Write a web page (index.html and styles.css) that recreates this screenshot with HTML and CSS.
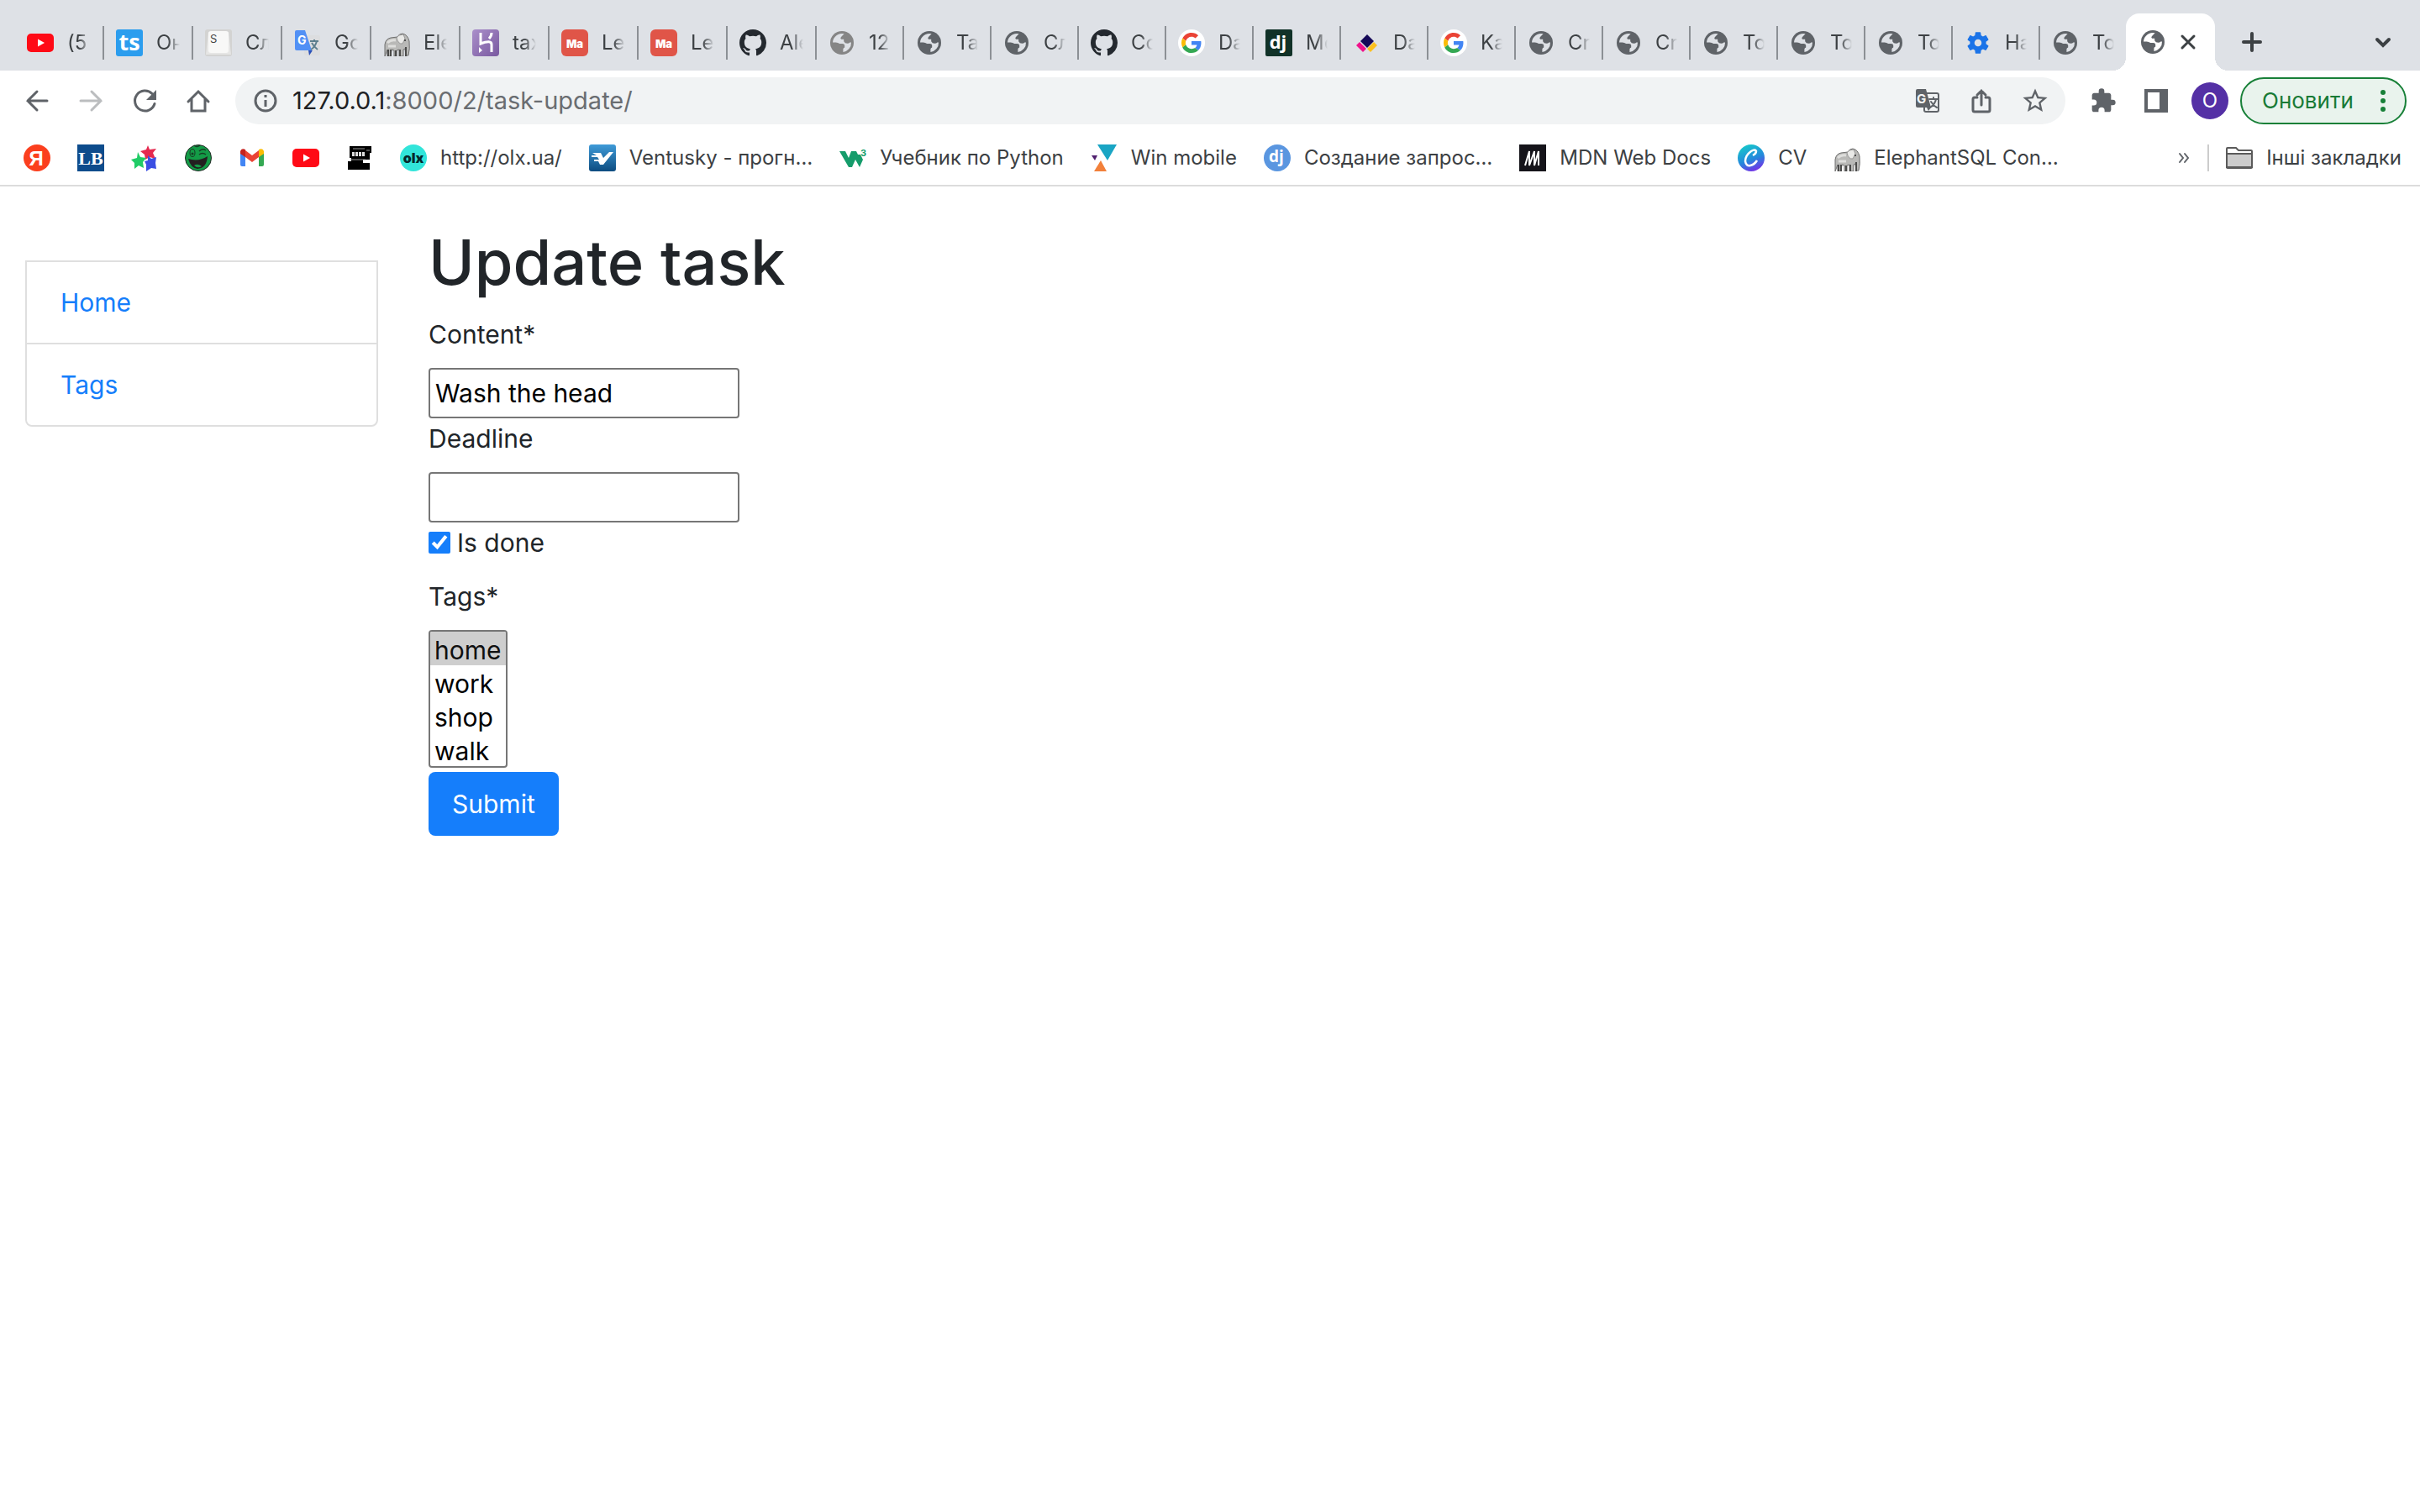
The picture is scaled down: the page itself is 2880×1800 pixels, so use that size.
FILE: index.html
```
<!DOCTYPE html>
<html lang="en">
<head>
<meta charset="utf-8">
<title>Update task</title>
<link rel="stylesheet" href="styles.css">
</head>
<body>
<svg class="sprite" aria-hidden="true">
  <symbol id="globe" viewBox="-2 -2 32 32">
    <circle cx="14" cy="14" r="14" fill="currentColor"/>
    <path class="sea" d="M3 13.4A11 11 0 0 1 16.6 3.3L12.8 7.2q-1.2 1.6.4 2.6h3v2.4q1.2 2.6 4.2 2.6 2-.2 3-1.4h1.6A11 11 0 0 1 15.4 24.9v-3.3q.2-1.6 1.8-2v-2.5q-.2-1.9-2.6-2.1h-3.4q-2-1.6-4.4-1.6z"/>
  </symbol>
  <symbol id="youtube" viewBox="0 0 32 32">
    <rect y="5" width="32" height="22" rx="5" fill="#ff0a16"/>
    <path d="M13 11.5v9l8-4.5z" fill="#fff"/>
  </symbol>
  <symbol id="github" viewBox="0 0 16 16">
    <path fill="#24292f" d="M8 0C3.58 0 0 3.58 0 8c0 3.54 2.29 6.53 5.47 7.59.4.07.55-.17.55-.38 0-.19-.01-.82-.01-1.49-2.01.37-2.53-.49-2.69-.94-.09-.23-.48-.94-.82-1.13-.28-.15-.68-.52-.01-.53.63-.01 1.08.58 1.23.82.72 1.21 1.87.87 2.33.66.07-.52.28-.87.51-1.07-1.78-.2-3.64-.89-3.64-3.95 0-.87.31-1.59.82-2.15-.08-.2-.36-1.02.08-2.12 0 0 .67-.21 2.2.82.64-.18 1.32-.27 2-.27s1.36.09 2 .27c1.53-1.04 2.2-.82 2.2-.82.44 1.1.16 1.92.08 2.12.51.56.82 1.27.82 2.15 0 3.07-1.87 3.75-3.65 3.95.29.25.54.73.54 1.48 0 1.07-.01 1.93-.01 2.2 0 .21.15.46.55.38A8.01 8.01 0 0 0 16 8c0-4.42-3.58-8-8-8z"/>
  </symbol>
  <symbol id="google" viewBox="-8 -8 64 64">
    <circle cx="24" cy="24" r="32" fill="#fff"/>
    <path fill="#EA4335" d="M24 9.5c3.54 0 6.71 1.22 9.21 3.6l6.85-6.85C35.9 2.38 30.47 0 24 0 14.62 0 6.51 5.38 2.56 13.22l7.98 6.19C12.43 13.72 17.74 9.5 24 9.5z"/>
    <path fill="#4285F4" d="M46.98 24.55c0-1.57-.15-3.09-.38-4.55H24v9.02h12.94c-.58 2.96-2.26 5.48-4.78 7.18l7.73 6c4.51-4.18 7.09-10.36 7.09-17.65z"/>
    <path fill="#FBBC05" d="M10.53 28.59c-.48-1.45-.76-2.99-.76-4.59s.27-3.14.76-4.59l-7.98-6.19C.92 16.46 0 20.12 0 24s.92 7.54 2.56 10.78l7.97-6.19z"/>
    <path fill="#34A853" d="M24 48c6.48 0 11.93-2.13 15.89-5.81l-7.73-6c-2.15 1.45-4.92 2.3-8.16 2.3-6.26 0-11.57-4.22-13.47-9.91l-7.98 6.19C6.51 42.62 14.62 48 24 48z"/>
  </symbol>
  <symbol id="mate" viewBox="0 0 32 32">
    <rect width="32" height="32" rx="6" fill="#e05548"/>
    <text x="16" y="22" text-anchor="middle" font-family="Inter, sans-serif" font-weight="900" font-size="13" fill="#fff">Ma</text>
  </symbol>
  <symbol id="elephant" viewBox="0 0 32 32">
    <path d="M2 32V18q1-7 7-8l8-1q2-4 6-4 6 1 8 9 1 9-1 17h-3l-1-8-2 1v8h-5v-8l-3 1v7h-3v-7l-3-1-1 8H5v-8z" fill="#b9b9b7" stroke="#6f6f6e"/>
    <path d="M16 10q2 8 7 7l3-6-2-5-5 1z" fill="#e9e9e7" stroke="#999"/>
    <path d="M6 24v8M9 24v8M15 25v7M20 24v8M27 21v11" stroke="#4b4b4a" stroke-width="2"/>
    <path d="M5 16q4-4 10-3M6 20h9" stroke="#dededc" stroke-width="3" fill="none"/>
    <circle cx="26" cy="13" r="1" fill="#333"/>
  </symbol>
</svg>

<header class="browser">
  <nav class="tabs" aria-label="Tabs">
    <a class="tab wide" href="#"><svg class="ico"><use href="#youtube"/></svg><span>(5</span></a>
    <a class="tab wide" href="#"><svg class="ico" viewBox="0 0 32 32"><rect width="32" height="32" rx="3" fill="#2b9dee"/><text x="16" y="25" text-anchor="middle" font-family="Open Sans, sans-serif" font-weight="700" font-size="27" fill="#fff">ts</text></svg><span>Он</span></a>
    <a class="tab wide" href="#"><svg class="ico" viewBox="0 0 32 32"><rect width="32" height="32" rx="3" fill="#d3d3d2"/><path d="M1 30 4 3h24l3 27z" fill="#e6e6e5"/><rect x="4" y="2" width="24" height="26" rx="3" fill="#f8f8f7"/><text x="6" y="16" font-family="Inter, sans-serif" font-size="13" fill="#444">S</text></svg><span>Сл</span></a>
    <a class="tab wide" href="#"><svg class="ico" viewBox="0 0 32 32"><rect x="12" y="7" width="19" height="24" rx="2" fill="#dcdddf"/><path d="M17 25h5l-4 6z" fill="#2b50b8"/><path d="M3 1h10l8 24H3q-2 0-2-2V3q0-2 2-2z" fill="#5290f5"/><text x="4" y="18" font-family="Inter, sans-serif" font-weight="700" font-size="14" fill="#fff">G</text><path d="M19 14h10M24 12v2M27 14q-2 7-7 10M21 16q3 5 7 8" stroke="#5d7f8d" stroke-width="2" fill="none"/></svg><span>Go</span></a>
    <a class="tab wide" href="#"><svg class="ico"><use href="#elephant"/></svg><span>Ele</span></a>
    <a class="tab wide" href="#"><svg class="ico" viewBox="0 0 32 32"><defs><linearGradient id="violet" x2="1" y2="1"><stop stop-color="#aa8fca"/><stop offset="1" stop-color="#7959a0"/></linearGradient></defs><rect width="32" height="32" rx="4" fill="url(#violet)"/><path d="M10 4v13q13-5 13 1v9M23 4q0 4-3 7" fill="none" stroke="#fff" stroke-width="3"/><path d="M8 21v7l4-3z" fill="#fff"/></svg><span>tax</span></a>
    <a class="tab wide" href="#"><svg class="ico"><use href="#mate"/></svg><span>Le</span></a>
    <a class="tab wide" href="#"><svg class="ico"><use href="#mate"/></svg><span>Le</span></a>
    <a class="tab wide" href="#"><svg class="ico"><use href="#github"/></svg><span>Ale</span></a>
    <a class="tab" href="#"><svg class="ico pale"><use href="#globe"/></svg><span>12</span></a>
    <a class="tab" href="#"><svg class="ico"><use href="#globe"/></svg><span>Ta</span></a>
    <a class="tab" href="#"><svg class="ico"><use href="#globe"/></svg><span>Сл</span></a>
    <a class="tab" href="#"><svg class="ico"><use href="#github"/></svg><span>Co</span></a>
    <a class="tab" href="#"><svg class="ico"><use href="#google"/></svg><span>Da</span></a>
    <a class="tab" href="#"><svg class="ico" viewBox="0 0 32 32"><rect width="32" height="32" rx="2" fill="#113228"/><text x="15" y="23" text-anchor="middle" font-family="Open Sans, sans-serif" font-weight="700" font-size="22" fill="#fff">dj</text></svg><span>Mo</span></a>
    <a class="tab" href="#"><svg class="ico" viewBox="0 0 32 32"><path d="m17 6 8 8-8 8-8-8z" fill="#150958"/><path d="m8 15 8 8-4 4-8-8z" fill="#f0128b"/><path d="m25 15 4 4-8 8-4-4z" fill="#fcc01f"/></svg><span>Da</span></a>
    <a class="tab" href="#"><svg class="ico"><use href="#google"/></svg><span>Ka</span></a>
    <a class="tab" href="#"><svg class="ico"><use href="#globe"/></svg><span>Cr</span></a>
    <a class="tab" href="#"><svg class="ico"><use href="#globe"/></svg><span>Cr</span></a>
    <a class="tab" href="#"><svg class="ico"><use href="#globe"/></svg><span>To</span></a>
    <a class="tab" href="#"><svg class="ico"><use href="#globe"/></svg><span>To</span></a>
    <a class="tab" href="#"><svg class="ico"><use href="#globe"/></svg><span>To</span></a>
    <a class="tab" href="#"><svg class="ico" viewBox="0 0 24 24"><path fill="#1a73e8" d="M19.14 12.94c.04-.3.06-.61.06-.94 0-.32-.02-.64-.07-.94l2.03-1.58c.18-.14.23-.41.12-.61l-1.92-3.32c-.12-.22-.37-.29-.59-.22l-2.39.96c-.5-.38-1.03-.7-1.62-.94l-.36-2.54c-.04-.24-.24-.41-.48-.41h-3.84c-.24 0-.43.17-.47.41l-.36 2.54c-.59.24-1.13.57-1.62.94l-2.39-.96c-.22-.08-.47 0-.59.22L2.74 8.87c-.12.21-.08.47.12.61l2.03 1.58c-.05.3-.09.63-.09.94s.02.64.07.94l-2.03 1.58c-.18.14-.23.41-.12.61l1.92 3.32c.12.22.37.29.59.22l2.39-.96c.5.38 1.03.7 1.62.94l.36 2.54c.05.24.24.41.48.41h3.84c.24 0 .44-.17.47-.41l.36-2.54c.59-.24 1.13-.56 1.62-.94l2.39.96c.22.08.47 0 .59-.22l1.92-3.32c.12-.22.07-.47-.12-.61l-2.01-1.58zM12 15.2a3.2 3.2 0 1 1 0-6.4 3.2 3.2 0 0 1 0 6.4z"/></svg><span>На</span></a>
    <a class="tab last" href="#"><svg class="ico"><use href="#globe"/></svg><span>To</span></a>
    <div class="tab active"><svg class="ico"><use href="#globe"/></svg><button class="plain" aria-label="Close tab"><svg class="close" viewBox="0 0 16 16"><path d="m1 1 14 14M15 1 1 15" stroke-width="3"/></svg></button></div>
    <button class="plain new-tab" aria-label="New tab"><svg class="ico" viewBox="0 0 32 32"><path d="M6 16h20M16 6v20" stroke-width="4"/></svg></button>
    <button class="plain tab-search" aria-label="Search tabs"><svg class="ico" viewBox="0 0 32 32"><path d="m9 13 7 7 7-7" stroke-width="4"/></svg></button>
  </nav>

  <div class="toolbar">
    <div class="nav-buttons">
      <button class="plain" aria-label="Back"><svg class="ico line" viewBox="0 0 32 32"><path d="M28 16H5M16 5 5 16l11 11"/></svg></button>
      <button class="plain" aria-label="Forward"><svg class="ico line off" viewBox="0 0 32 32"><path d="M4 16h24M17 5l11 11-11 11"/></svg></button>
      <button class="plain" aria-label="Reload"><svg class="ico line" viewBox="0 0 32 32"><path d="M28 19.5A12 12 0 1 1 25 7.5"/><path class="solid" d="M30 3v12H18z"/></svg></button>
      <button class="plain" aria-label="Home"><svg class="ico line" viewBox="0 0 32 32"><path d="M4 17 16 5l12 12M8 14v14h16V14"/></svg></button>
    </div>
    <div class="omnibox">
      <svg class="ico line" viewBox="0 0 32 32"><circle cx="16" cy="16" r="12"/><path d="M16 15v8M16 9v3"/></svg>
      <div class="url" role="textbox" aria-label="Address"><b>127.0.0.1</b>:8000/2/task-update/</div>
      <div class="page-actions">
        <button class="plain" aria-label="Translate"><svg class="ico" viewBox="0 0 32 32"><rect x="12" y="7" width="17" height="22" rx="2" fill="none" stroke="#5f6368" stroke-width="2"/><path d="M18 14h10M23 12v2M26 14q-1 6-7 10M20 17q3 5 7 7" fill="none" stroke="#5f6368" stroke-width="2"/><path d="M4 2h10l6 22-3 4-2-4H4q-2 0-2-2V4q0-2 2-2z" fill="#5f6368"/><text x="3" y="19" font-family="Inter, sans-serif" font-weight="700" font-size="15" fill="#f1f3f4">G</text></svg></button>
        <button class="plain" aria-label="Share"><svg class="ico line" viewBox="0 0 32 32"><path d="M11 12H8q-2 0-2 2v13q0 2 2 2h16q2 0 2-2V14q0-2-2-2h-3M16 21V4M11 9l5-5 5 5"/></svg></button>
        <button class="plain" aria-label="Bookmark"><svg class="ico" viewBox="1 1 22 22"><path fill="#5f6368" d="m22 9.240-7.190-.62L12 2 9.190 8.630 2 9.240l5.460 4.730L5.820 21 12 17.270 18.180 21l-1.630-7.030L22 9.240zM12 15.400l-3.760 2.270 1-4.280-3.320-2.880 4.380-.38L12 6.100l1.710 4.040 4.380.38-3.320 2.880 1 4.280L12 15.400z"/></svg></button>
      </div>
    </div>
    <button class="plain ext" aria-label="Extensions"><svg class="ico" viewBox="0 0 24 24"><path fill="#5f6368" d="M20.500 11H19V7c0-1.100-.9-2-2-2h-4V3.500a2.500 2.500 0 0 0-5 0V5H4c-1.100 0-2 .9-2 2v3.800h1.500a2.700 2.700 0 0 1 0 5.400H2V20c0 1.100.9 2 2 2h3.800v-1.500a2.700 2.700 0 0 1 5.400 0V22H17c1.100 0 2-.9 2-2v-4h1.500a2.500 2.500 0 0 0 0-5z"/></svg></button>
    <button class="plain panel" aria-label="Side panel"><svg class="ico" viewBox="0 0 32 32"><path fill="#5f6368" d="M2 2h28v28H2zm4 4v20h14V6z" fill-rule="evenodd"/></svg></button>
    <button class="avatar">O</button>
    <button class="update">Оновити<svg viewBox="0 0 8 28"><circle cx="4" cy="4" r="3"/><circle cx="4" cy="14" r="3"/><circle cx="4" cy="24" r="3"/></svg></button>
  </div>

  <nav class="bookmarks" aria-label="Bookmarks">
    <a href="#" aria-label="Yandex"><svg class="ico" viewBox="0 0 32 32"><circle cx="16" cy="16" r="16" fill="#fb3f1e"/><text x="15" y="25" text-anchor="middle" font-family="Liberation Sans, sans-serif" font-weight="700" font-size="24" fill="#fff">Я</text></svg></a>
    <a href="#" aria-label="LB"><svg class="ico" viewBox="0 0 32 32"><rect width="32" height="32" fill="#0d4c8c"/><text x="16" y="24" text-anchor="middle" font-family="Liberation Serif, serif" font-weight="700" font-size="22" fill="#fff">LB</text></svg></a>
    <a href="#" aria-label="Stars"><svg class="ico" viewBox="0 0 32 32"><path d="m20 1 2 5 8-1-4 5 3 7-7-2-5 3-1-6-5-4 7-2z" fill="#e5294f"/><path d="m8 9 3 6 7 1-4 5 1 7-6-3-5 4 0-7-4-4 7-2z" fill="#20cc66"/><path d="m20 13 4 4 6-2-1 7 1 7-6-1-6 4 0-8-2-4 4-1z" fill="#3b4fe3"/></svg></a>
    <a href="#" aria-label="Smile"><svg class="ico" viewBox="0 0 32 32"><circle cx="16" cy="16" r="15.5" fill="#139b46" stroke="#252a27"/><path d="M4 17q12 4 23-3-1 14-12 15Q7 28 4 17z" fill="#231f20"/><path d="M11 25q4-3 9 1-5 3-9-1z" fill="#139b46"/><path d="M11 1q3 3 7 0M17 8q4-4 8-1M17 12q4-3 8 0" fill="none" stroke="#173b25" stroke-width="1.5"/><ellipse cx="9" cy="10" rx="3" ry="4.5" fill="#139b46" stroke="#173b25"/><circle cx="9" cy="11" r="1.5" fill="#173b25"/></svg></a>
    <a href="#" aria-label="Gmail"><svg class="ico" viewBox="0 0 32 32"><path d="M2 9v15q0 2 2 2h4V13z" fill="#4285f4"/><path d="M24 13v13h4q2 0 2-2V9z" fill="#34a853"/><path d="m8 7 8 6 8-6v8l-8 6-8-6z" fill="#ea4335"/><path d="M2 8q1-4 6-2v9l-6-4z" fill="#c5221f"/><path d="M30 8q-1-4-6-2v9l6-4z" fill="#fbbc04"/></svg></a>
    <a href="#" aria-label="YouTube"><svg class="ico"><use href="#youtube"/></svg></a>
    <a href="#" aria-label="Typewriter"><svg class="ico" viewBox="0 0 32 32"><path d="M4 2h26v8h-2v8h-8v4h8v8H2V20h4v-4H4z"/><path d="M8 5h14M24 7h4M5 18h18" stroke="#999" stroke-width="1"/><path d="M7 9h3v5H7zM11 9h3v5h-3zM15 9h3v5h-3zM19 9h3v5h-3z" fill="#ddd"/></svg></a>
    <a href="#"><svg class="ico" viewBox="0 0 32 32"><circle cx="16" cy="16" r="16" fill="#32e5da"/><text x="16" y="22" text-anchor="middle" font-family="Inter, sans-serif" font-weight="900" font-size="16" fill="#052a2d">olx</text></svg>http://olx.ua/</a>
    <a href="#"><svg class="ico" viewBox="0 0 32 32"><defs><linearGradient id="sky" x2="0" y2="1"><stop stop-color="#3f9bd8"/><stop offset="1" stop-color="#0d4c80"/></linearGradient></defs><rect width="32" height="32" rx="3" fill="url(#sky)"/><path d="M4 10h10l3 6 7-7h5L17 24h-4l-2-4H6v-2h6l-2-3H3v-2h6z" fill="#fff"/></svg>Ventusky - прогн…</a>
    <a href="#"><svg class="ico" viewBox="0 0 32 32"><path d="M0 8h7l4 8 3-8h6l2 4 3 0 3 6-4 9-5-9-4 9h-4z" fill="#159c6b"/><text x="25" y="14" font-family="Inter, sans-serif" font-weight="700" font-size="11" fill="#159c6b">3</text></svg>Учебник по Python</a>
    <a href="#"><svg class="ico" viewBox="0 0 32 32"><path d="M8 0h23L20 19z" fill="#1aa5c4"/><path d="M1 13h7l-3 6z" fill="#51206f"/><path d="m12 19 7 13H4z" fill="#f2803a"/></svg>Win mobile</a>
    <a href="#"><svg class="ico" viewBox="0 0 32 32"><circle cx="16" cy="16" r="16" fill="#5a96e0"/><text x="15" y="21" text-anchor="middle" font-family="Open Sans, sans-serif" font-weight="700" font-size="19" fill="#fff">dj</text></svg>Создание запрос…</a>
    <a href="#"><svg class="ico" viewBox="0 0 32 32"><rect width="32" height="32" fill="#15141a"/><path d="m7 25 5-17v17l6-17v17l5-17v17" fill="none" stroke="#fff" stroke-width="2" stroke-linejoin="bevel"/></svg>MDN Web Docs</a>
    <a href="#"><svg class="ico" viewBox="0 0 32 32"><defs><linearGradient id="aqua" x1=".3" x2=".7" y2="1"><stop stop-color="#16c8ca"/><stop offset=".55" stop-color="#2589dc"/><stop offset="1" stop-color="#7a2ae8"/></linearGradient></defs><circle cx="16" cy="16" r="16" fill="url(#aqua)"/><path d="M18 13q4-2 4-5-1-3-6 0-7 5-7 12 1 6 6 5 5-1 8-6" fill="none" stroke="#fff" stroke-width="2.5"/></svg>CV</a>
    <a href="#"><svg class="ico"><use href="#elephant"/></svg>ElephantSQL Con…</a>
    <button class="plain more" aria-label="More bookmarks"><svg viewBox="0 0 12 12"><path d="m1 1 4 5-4 5M7 1l4 5-4 5" stroke-width="2"/></svg></button>
    <a class="other" href="#"><svg class="ico" viewBox="0 0 32 32"><path d="M1 26V5q0-1 1-1h10l3 3h15q1 0 1 1v19q0 1-1 1H2q-1 0-1-1z" fill="#fff" stroke="#5a5a5a" stroke-width="2"/><path d="M1 11h30v16H1z" fill="#ccc" stroke="#5a5a5a" stroke-width="2"/></svg>Інші закладки</a>
  </nav>
</header>

<main class="page">
  <aside>
    <ul class="menu">
      <li><a href="#">Home</a></li>
      <li><a href="#">Tags</a></li>
    </ul>
  </aside>
  <section>
    <h1>Update task</h1>
    <form>
      <label for="content">Content*</label>
      <input class="text" id="content" type="text" value="Wash the head">
      <label for="deadline">Deadline</label>
      <input class="text" id="deadline" type="text">
      <label class="check"><input type="checkbox" checked>Is done</label>
      <label for="tags">Tags*</label>
      <select id="tags" multiple size="4">
        <option selected>home</option>
        <option>work</option>
        <option>shop</option>
        <option>walk</option>
      </select>
      <button class="submit" type="button">Submit</button>
    </form>
  </section>
</main>
</body>
</html>
```
FILE: styles.css
```
* { box-sizing: border-box; }

body {
  margin: 0;
  background: #fff;
  color: #212529;
  font-family: Inter, "Liberation Sans", sans-serif;
  font-size: 30px;
  line-height: 48px;
  font-feature-settings: "calt" 0;
}

a { text-decoration: none; }

.sprite { display: none; }

.ico {
  display: block;
  flex: none;
  width: 32px;
  height: 32px;
}

.sea { fill: var(--sea); }

.plain {
  display: block;
  flex: none;
  padding: 0;
  border: 0;
  background: none;
}

.plain path { stroke-linecap: round; }

/* Browser chrome */

.browser {
  border-bottom: 2px solid #dcdcdc;
  font-size: 24px;
  line-height: 32px;
}

.tabs {
  --sea: #dee1e6;
  display: flex;
  align-items: flex-end;
  height: 84px;
  padding-left: 18px;
  background: #dee1e6;
}

.tab {
  display: flex;
  align-items: center;
  gap: 16px;
  flex: 0 1 104px;
  min-width: 0;
  height: 40px;
  margin-bottom: 13px;
  padding: 0 14px;
  border-right: 2px solid #8c9095;
  color: #3c4043;
  white-space: nowrap;
}

.tab .ico { color: #5f6368; }
.tab .ico.pale { color: #858585; }

.tab span {
  flex: 1;
  min-width: 0;
  overflow: hidden;
  -webkit-mask-image: linear-gradient(to left, transparent, #000 14px);
  mask-image: linear-gradient(to left, transparent, #000 14px);
}

.tab.wide { flex-basis: 106px; }
.tab.last { flex-basis: 102px; border-right: 0; }

.tab.active {
  --sea: #fff;
  position: relative;
  flex: none;
  gap: 18px;
  height: 68px;
  margin: 0;
  padding: 0 24px 0 16px;
  border: 0;
  border-radius: 16px 16px 0 0;
  background: #fff;
}

.tab.active::before,
.tab.active::after {
  content: "";
  position: absolute;
  bottom: 0;
  width: 16px;
  height: 16px;
}

.tab.active::before {
  right: 100%;
  background: radial-gradient(circle at 0 0, transparent 16px, #fff 16px);
}

.tab.active::after {
  left: 100%;
  background: radial-gradient(circle at 100% 0, transparent 16px, #fff 16px);
}

.tabs .plain path { stroke: #3c4043; fill: none; }
.close { display: block; width: 16px; height: 16px; overflow: visible; }
.new-tab { margin: 0 0 18px 28px; }
.tab-search { margin: 0 28px 18px auto; }

.toolbar {
  display: flex;
  align-items: center;
  height: 72px;
  padding: 0 16px 0 28px;
}

.nav-buttons,
.page-actions { display: flex; gap: 32px; }

.line path,
.line circle {
  fill: none;
  stroke: #5f6368;
  stroke-width: 3;
}

.line.off path { stroke: #bbbdbf; }
.line .solid { fill: #5f6368; stroke: none; }

.omnibox {
  display: flex;
  align-items: center;
  flex: 1;
  gap: 16px;
  height: 56px;
  margin-left: 28px;
  padding: 0 20px;
  border-radius: 28px;
  background: #f1f3f4;
}

.url {
  flex: 1;
  color: #6a6d71;
  font-size: 29px;
}

.url b { color: #202124; font-weight: 400; }

.ext { margin: 0 31px 0 29px; }

.avatar {
  width: 44px;
  height: 44px;
  margin: 0 14px 0 26px;
  padding: 0;
  border: 0;
  border-radius: 50%;
  background: #5430a5;
  color: #fff;
  font: 24px/44px Inter, sans-serif;
}

.update {
  display: flex;
  align-items: center;
  justify-content: space-between;
  width: 198px;
  height: 56px;
  padding: 0 22px 0 24px;
  border: 2px solid #188038;
  border-radius: 28px;
  background: #e9f3ed;
  color: #187a36;
  font: 26px/32px Inter, sans-serif;
}

.update svg { width: 8px; height: 28px; fill: #188038; }

.bookmarks {
  display: flex;
  align-items: center;
  gap: 32px;
  height: 64px;
  padding: 0 22px 0 28px;
}

.bookmarks a {
  display: flex;
  align-items: center;
  gap: 16px;
  color: #3c4043;
  white-space: nowrap;
}

.more { margin-left: auto; }
.more svg { display: block; width: 12px; height: 12px; fill: none; stroke: #5f6368; overflow: visible; }

.bookmarks .other {
  margin-left: -10px;
  padding-left: 20px;
  border-left: 2px solid #ccc;
}

/* Page */

.page {
  display: grid;
  grid-template-columns: 1fr 5fr;
  padding-top: 40px;
}

.page > * { padding: 0 30px; }

.menu {
  margin: 48px 0 0;
  padding: 0;
  border: 2px solid #dfdfdf;
  border-radius: 0 0 8px 8px;
  list-style: none;
}

.menu li { padding: 24px 40px; }
.menu li + li { border-top: 2px solid #dfdfdf; }
.menu a { color: #157efb; }

h1 {
  margin: 0 0 12px;
  font-size: 74px;
  font-weight: 500;
  line-height: 100px;
}

label { display: table; margin-bottom: 16px; }

.text {
  display: block;
  width: 370px;
  height: 60px;
  padding: 0 6px;
  border: 2px solid #767676;
  border-radius: 4px;
  background: #fff;
  color: #000;
  font: inherit;
}

.check { display: flex; align-items: center; gap: 8px; width: max-content; }

.check input {
  width: 26px;
  height: 26px;
  margin: 0;
  accent-color: #157efb;
}

select {
  display: block;
  height: 164px;
  margin-bottom: 5px;
  padding: 0;
  overflow: hidden;
  border: 2px solid #767676;
  border-radius: 4px;
  background: #fff;
  color: #000;
  font: inherit;
}

option {
  height: 40px;
  padding: 4px 5px 0;
  line-height: 36px;
}

option:checked { background: #cecece; color: #101010; }

.submit {
  height: 76px;
  padding: 0 28px;
  border: 0;
  border-radius: 8px;
  background: #157efb;
  color: #fff;
  font: inherit;
}
```
